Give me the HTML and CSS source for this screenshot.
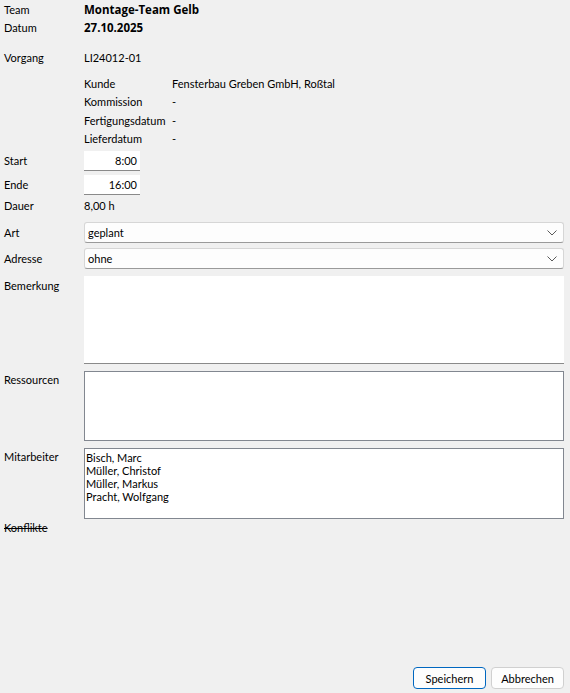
FILE: index.html
```html
<!DOCTYPE html>
<html lang="de">
<head>
<meta charset="utf-8">
<title>Einsatz</title>
<link rel="stylesheet" href="styles.css">
</head>
<body>
<div class="page">
  <div class="form">
    <div class="row r-team"><span class="lbl">Team</span><span class="val bold">Montage-Team Gelb</span></div>
    <div class="row r-datum"><span class="lbl">Datum</span><span class="val bold">27.10.2025</span></div>
    <div class="row r-vorgang"><span class="lbl">Vorgang</span><span class="val">LI24012-01</span></div>
    <div class="sub">
      <div class="subrow"><span class="slbl">Kunde</span><span class="sval">Fensterbau Greben GmbH, Roßtal</span></div>
      <div class="subrow"><span class="slbl">Kommission</span><span class="sval">-</span></div>
      <div class="subrow"><span class="slbl">Fertigungsdatum</span><span class="sval">-</span></div>
      <div class="subrow"><span class="slbl">Lieferdatum</span><span class="sval">-</span></div>
    </div>
    <div class="row r-start"><span class="lbl">Start</span><div class="time">8:00</div></div>
    <div class="row r-ende"><span class="lbl">Ende</span><div class="time">16:00</div></div>
    <div class="row r-dauer"><span class="lbl">Dauer</span><span class="val">8,00 h</span></div>
    <div class="row r-art"><span class="lbl">Art</span><div class="select"><span>geplant</span><svg class="chev" width="10" height="6" viewBox="0 0 10 6"><path d="M0.5 0.5 L5 5 L9.5 0.5" fill="none" stroke="#5a5a5a" stroke-width="1"/></svg></div></div>
    <div class="row r-adresse"><span class="lbl">Adresse</span><div class="select"><span>ohne</span><svg class="chev" width="10" height="6" viewBox="0 0 10 6"><path d="M0.5 0.5 L5 5 L9.5 0.5" fill="none" stroke="#5a5a5a" stroke-width="1"/></svg></div></div>
    <div class="row top r-bem"><span class="lbl">Bemerkung</span><div class="memo"></div></div>
    <div class="row top r-res"><span class="lbl">Ressourcen</span><div class="list res"></div></div>
    <div class="row top r-mit"><span class="lbl">Mitarbeiter</span>
      <div class="list mit">
        <div class="item">Bisch, Marc</div>
        <div class="item">Müller, Christof</div>
        <div class="item">Müller, Markus</div>
        <div class="item">Pracht, Wolfgang</div>
      </div>
    </div>
    <div class="row r-konf"><span class="lbl strike">Konflikte</span></div>
  </div>
  <div class="buttons">
    <button class="btn primary">Speichern</button>
    <button class="btn">Abbrechen</button>
  </div>
</div>
</body>
</html>
```
FILE: styles.css
```css
html, body {
  margin: 0;
  padding: 0;
  background: #f0f0f0;
}
body {
  font-family: "Lato", "Liberation Sans", sans-serif;
  font-size: 11px;
  color: #000;
}
.page {
  height: 693px;
  display: flex;
  flex-direction: column;
  padding: 0 6px 0 4px;
  box-sizing: border-box;
}
.form {
  flex: 1;
  display: flex;
  flex-direction: column;
}
.row {
  display: grid;
  grid-template-columns: 80px 1fr;
  align-items: center;
}
.row.top {
  align-items: start;
}
.lbl, .val {
  line-height: 18px;
  white-space: nowrap;
}
.bold {
  font-family: "Open Sans", "Lato", sans-serif;
  font-weight: 700;
  font-size: 11.5px;
}
.r-team { margin-top: 1px; height: 18px; }
.r-datum { height: 18px; }
.r-vorgang { margin-top: 12px; height: 18px; }
.sub {
  margin-top: 8px;
  padding-left: 80px;
  display: flex;
  flex-direction: column;
}
.subrow {
  display: grid;
  grid-template-columns: 88px 1fr;
  height: 18.3px;
  line-height: 18px;
  white-space: nowrap;
}
.r-start { margin-top: 3px; }
.r-ende { margin-top: 4px; }
.time {
  width: 56px;
  height: 20px;
  box-sizing: border-box;
  background: #fff;
  border-bottom: 1px solid #8a8a8a;
  text-align: right;
  padding-right: 3px;
  line-height: 20px;
}
.r-dauer { margin-top: 2px; height: 18px; }
.r-art { margin-top: 7px; }
.r-adresse { margin-top: 5px; }
.select {
  height: 21px;
  box-sizing: border-box;
  background: #fdfdfd;
  border: 1px solid #d6d6d6;
  border-bottom-color: #9a9a9a;
  border-radius: 3px;
  display: flex;
  align-items: center;
  justify-content: space-between;
  padding: 0 6px 0 3px;
}
.chev { display: block; }
.r-bem { margin-top: 7px; }
.r-bem .lbl { margin-top: 1px; }
.memo {
  height: 88px;
  box-sizing: border-box;
  background: #fff;
  border-bottom: 1px solid #8a8a8a;
}
.r-res { margin-top: 7px; }
.list {
  box-sizing: border-box;
  background: #fff;
  border: 1px solid #828790;
}
.res { height: 70px; }
.r-mit { margin-top: 7px; }
.mit { height: 71px; padding: 2px 0 0 1px; }
.item { line-height: 13px; white-space: nowrap; }
.r-konf { margin-top: 0; height: 18px; }
.strike { text-decoration: line-through; }
.buttons {
  display: flex;
  justify-content: flex-end;
  gap: 5px;
  padding-bottom: 4px;
}
.btn {
  font-family: inherit;
  font-size: 11px;
  color: #000;
  width: 73px;
  height: 22px;
  box-sizing: border-box;
  background: #fdfdfd;
  border: 1px solid #d0d0d0;
  border-radius: 4px;
  padding: 0;
}
.btn.primary {
  border-color: #0067c0;
}
```
